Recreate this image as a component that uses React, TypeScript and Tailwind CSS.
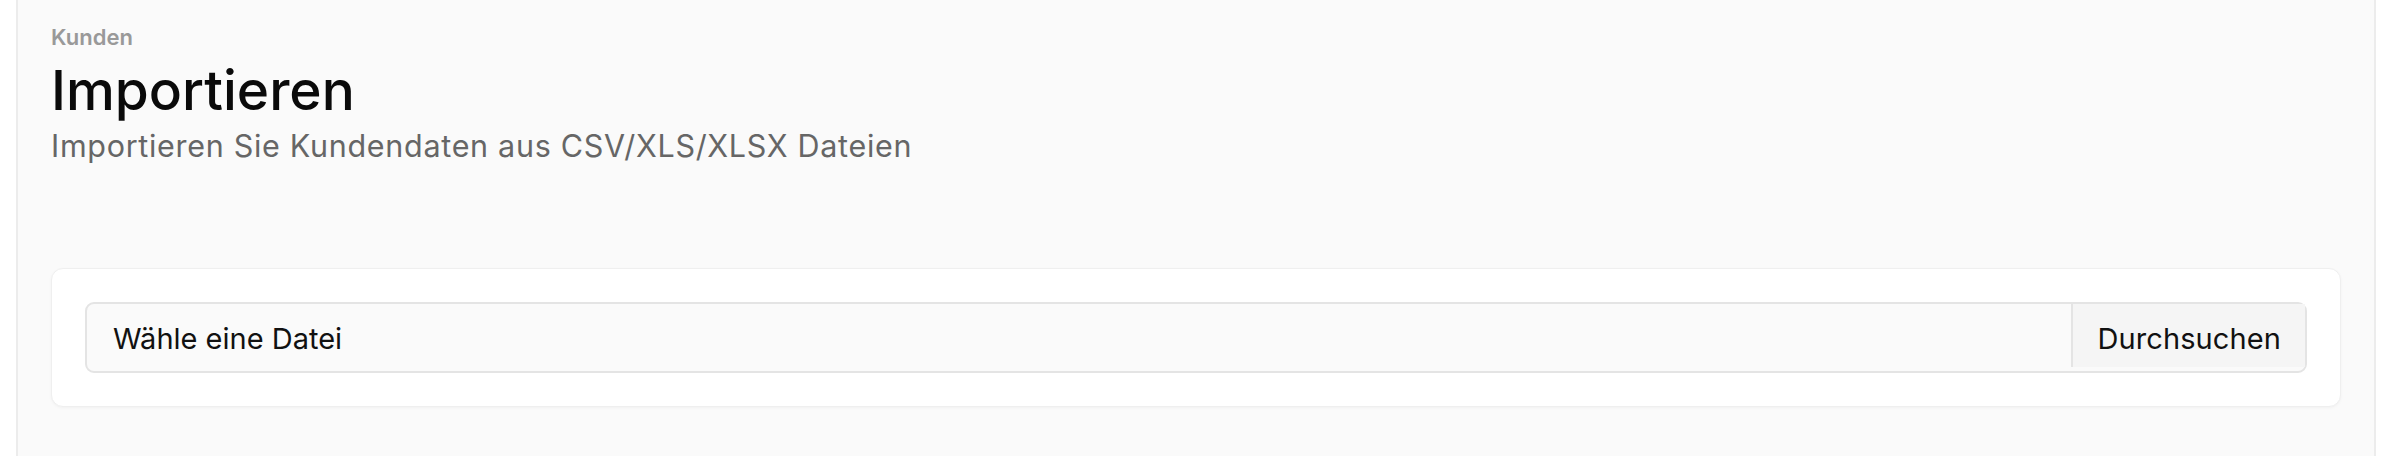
export default function App() {
  return (
    <div className="min-h-screen bg-white font-['Inter','Noto_Sans',sans-serif]">
      <div className="mx-[16px] min-h-[456px] border-x-2 border-[#ececec] bg-[#fafafa] px-[33px] pt-[22px]">
        <div className="text-[22px] leading-[30px] font-semibold text-[#999999]">Kunden</div>
        <h1 className="mt-[8px] text-[55px] leading-[60px] font-medium text-[#0a0a0a]">
          Importieren
        </h1>
        <p className="mt-[5px] text-[30.5px] leading-[42px] tracking-[0.7px] text-[#666666]">
          Importieren Sie Kundendaten aus CSV/XLS/XLSX Dateien
        </p>

        <div className="mt-[101px] rounded-[12px] border border-[#efefef] bg-white p-[33px] shadow-[0_1px_3px_rgba(0,0,0,0.04)]">
          <div className="flex h-[71px] items-stretch rounded-[9px] border-2 border-[#e4e4e4] bg-[#fafafa]">
            <div className="flex flex-1 items-center pl-[26px] pt-[2px] text-[29px] text-[#111111]">
              Wähle eine Datei
            </div>
            <div className="flex h-[63px] items-center self-start border-l-2 border-[#e4e4e4] bg-[#f5f5f5] px-[24px] pt-[6px] text-[29px] tracking-[0.1px] text-[#111111]">
              Durchsuchen
            </div>
          </div>
        </div>
      </div>
    </div>
  );
}
